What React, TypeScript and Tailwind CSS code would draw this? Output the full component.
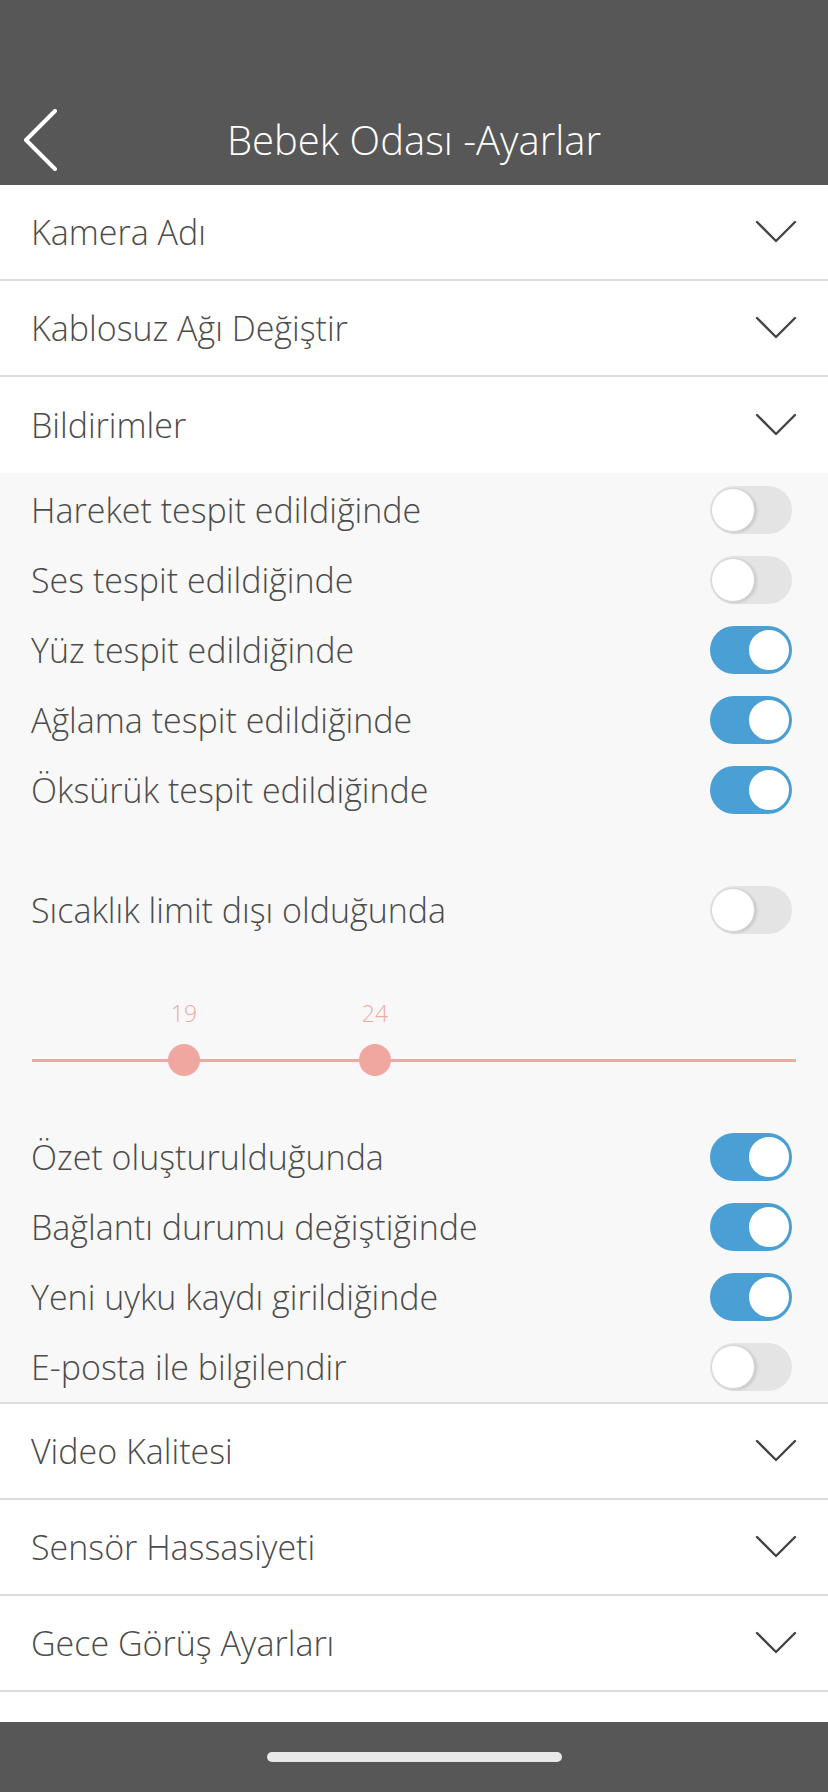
import { useState } from "react";

type ToggleItem = {
  label: string;
  on: boolean;
};

const topToggles: ToggleItem[] = [
  { label: "Hareket tespit edildiğinde", on: false },
  { label: "Ses tespit edildiğinde", on: false },
  { label: "Yüz tespit edildiğinde", on: true },
  { label: "Ağlama tespit edildiğinde", on: true },
  { label: "Öksürük tespit edildiğinde", on: true },
];

const bottomToggles: ToggleItem[] = [
  { label: "Özet oluşturulduğunda", on: true },
  { label: "Bağlantı durumu değiştiğinde", on: true },
  { label: "Yeni uyku kaydı girildiğinde", on: true },
  { label: "E-posta ile bilgilendir", on: false },
];

const font = { fontFamily: "'Open Sans', 'Noto Sans', sans-serif" };

export default function App() {
  return (
    <div
      className="flex h-[1792px] w-[828px] flex-col overflow-hidden bg-white text-[#4c4c4c]"
      style={font}
    >
      <Header />
      <div className="flex-1">
        <AccordionRow label="Kamera Adı" />
        <AccordionRow label="Kablosuz Ağı Değiştir" />
        <AccordionRow label="Bildirimler" noBorder />
        <NotificationsPanel />
        <AccordionRow label="Video Kalitesi" />
        <AccordionRow label="Sensör Hassasiyeti" />
        <AccordionRow label="Gece Görüş Ayarları" />
      </div>
      <div className="flex h-[70px] items-center justify-center bg-[#575757]">
        <div className="h-[10px] w-[295px] rounded-full bg-[#e9e9e9]" />
      </div>
    </div>
  );
}

function Header() {
  return (
    <div className="flex h-[185px] flex-col justify-end bg-[#575757] pb-[2px]">
      <div className="grid h-[86px] grid-cols-[80px_1fr_80px] items-center">
        <button className="flex items-center pl-[22px]">
          <svg width="38" height="62" viewBox="0 0 38 62" fill="none">
            <polyline
              points="33,2 4,31 33,60"
              stroke="white"
              strokeWidth="4"
              strokeLinecap="round"
              strokeLinejoin="round"
            />
          </svg>
        </button>
        <h1 className="text-center text-[40px] font-[350] text-white">
          Bebek Odası -Ayarlar
        </h1>
        <div />
      </div>
    </div>
  );
}

function AccordionRow({
  label,
  noBorder,
}: {
  label: string;
  noBorder?: boolean;
}) {
  return (
    <div
      className={
        noBorder
          ? "flex h-[96px] items-center justify-between pl-[31px] pr-[31px]"
          : "flex h-[96px] items-center justify-between border-b-2 border-[#dcdcdc] pl-[31px] pr-[31px]"
      }
    >
      <span className="text-[34px] font-[350]">{label}</span>
      <svg width="42" height="24" viewBox="0 0 42 24" fill="none">
        <polyline
          points="2,2 21,21 40,2"
          stroke="#444"
          strokeWidth="2.4"
          strokeLinecap="round"
          strokeLinejoin="round"
        />
      </svg>
    </div>
  );
}

function NotificationsPanel() {
  return (
    <div className="border-b-2 border-[#dcdcdc] bg-[#f8f8f8] pt-[2px]">
      {topToggles.map((item) => (
        <ToggleRow key={item.label} item={item} />
      ))}
      <div className="h-[50px]" />
      <ToggleRow item={{ label: "Sıcaklık limit dışı olduğunda", on: false }} />
      <TemperatureSlider />
      {bottomToggles.map((item) => (
        <ToggleRow key={item.label} item={item} />
      ))}
    </div>
  );
}

function ToggleRow({ item }: { item: ToggleItem }) {
  const [on, setOn] = useState(item.on);

  return (
    <div className="flex h-[70px] items-center justify-between pl-[31px] pr-[36px]">
      <span className="text-[34px] font-[350]">{item.label}</span>
      <Toggle on={on} onChange={() => setOn(!on)} />
    </div>
  );
}

function Toggle({ on, onChange }: { on: boolean; onChange: () => void }) {
  return (
    <button
      onClick={onChange}
      className={
        on
          ? "relative h-[48px] w-[82px] shrink-0 rounded-full bg-[#4a9fd4]"
          : "relative h-[48px] w-[82px] shrink-0 rounded-full bg-[#e4e4e4]"
      }
    >
      <span
        className={
          on
            ? "absolute right-[1px] top-[2px] h-[44px] w-[44px] rounded-full border-2 border-[#4a9fd4] bg-white"
            : "absolute left-[1px] top-[2px] h-[44px] w-[44px] rounded-full border border-[#d6d6d6] bg-white shadow-[2px_1px_3px_rgba(0,0,0,0.12)]"
        }
      />
    </button>
  );
}

function TemperatureSlider() {
  const min = 19;
  const max = 24;

  return (
    <div className="relative h-[177px] px-[32px]">
      <div className="absolute left-[32px] right-[32px] top-[114px] h-[3px] bg-[#f0a9a2]" />
      <SliderThumb value={min} left={184} />
      <SliderThumb value={max} left={375} />
    </div>
  );
}

function SliderThumb({ value, left }: { value: number; left: number }) {
  return (
    <div
      className="absolute top-[54px] flex w-[40px] -translate-x-1/2 flex-col items-center"
      style={{ left }}
    >
      <span className="h-[28px] text-[23px] font-light leading-[28px] text-[#f0a9a2]">
        {value}
      </span>
      <span className="mt-[17px] h-[32px] w-[32px] rounded-full bg-[#f0a7a0]" />
    </div>
  );
}
